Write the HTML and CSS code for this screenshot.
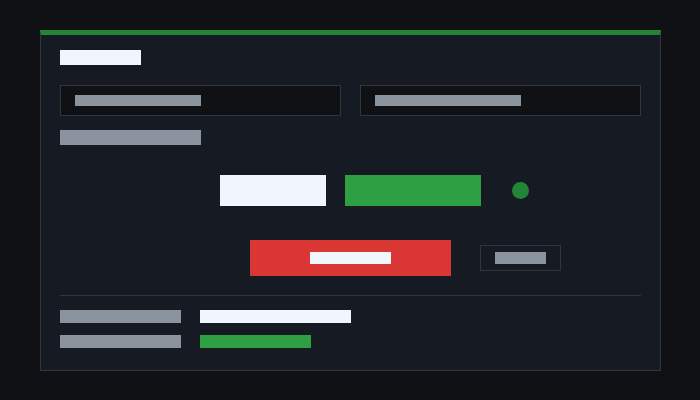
FILE: index.html
```html
<!DOCTYPE html>
<html lang="en">
<head>
<meta charset="utf-8">
<title>Settings panel</title>
<link rel="stylesheet" href="styles.css">
</head>
<body>
<main class="panel">
  <div class="title"></div>
  <div class="inputs">
    <div class="input"><span class="ph ph-a"></span></div>
    <div class="input"><span class="ph ph-b"></span></div>
  </div>
  <div class="label"></div>
  <div class="actions">
    <span class="btn btn-light"></span>
    <span class="btn btn-green"></span>
    <span class="dot"></span>
  </div>
  <div class="danger-row">
    <span class="btn-danger"><span class="danger-text"></span></span>
    <span class="btn-outline"><span class="outline-text"></span></span>
  </div>
  <div class="divider"></div>
  <div class="stats">
    <div class="stat"><span class="key"></span><span class="val val-white"></span></div>
    <div class="stat"><span class="key"></span><span class="val val-green"></span></div>
  </div>
</main>
</body>
</html>
```

FILE: styles.css
```css
html, body {
  margin: 0;
  padding: 0;
  background: #0f1114;
  font-family: "Liberation Sans", Arial, sans-serif;
}

body {
  width: 700px;
  height: 400px;
  padding: 30px 0 0 40px;
  box-sizing: border-box;
}

.panel {
  width: 621px;
  height: 341px;
  box-sizing: border-box;
  background: #161a22;
  border: 1px solid #30363d;
  border-top: 5px solid #238636;
  padding: 15px 19px 0 19px;
  display: flex;
  flex-direction: column;
}

.title {
  width: 81px;
  height: 15px;
  background: #f0f6fc;
  margin-bottom: 20px;
}

.inputs {
  display: grid;
  grid-template-columns: 1fr 1fr;
  column-gap: 19px;
  margin-bottom: 14px;
}

.input {
  height: 31px;
  box-sizing: border-box;
  border: 1px solid #30363d;
  background: #0f1114;
  padding-left: 14px;
  display: flex;
  align-items: center;
}

.ph {
  display: block;
  height: 11px;
  background: #8b949e;
}
.ph-a { width: 126px; }
.ph-b { width: 146px; }

.label {
  width: 141px;
  height: 15px;
  background: #8b949e;
  margin-bottom: 30px;
}

.actions {
  display: flex;
  align-items: center;
  height: 31px;
  padding-left: 160px;
  margin-bottom: 34px;
}

.btn {
  display: block;
  height: 31px;
}
.btn-light {
  width: 106px;
  background: #f0f6fc;
}
.btn-green {
  width: 136px;
  background: #2ea043;
  margin-left: 19px;
}
.dot {
  display: block;
  width: 17px;
  height: 17px;
  border-radius: 50%;
  background: #238636;
  margin-left: 31px;
}

.danger-row {
  display: flex;
  align-items: center;
  height: 36px;
  padding-left: 190px;
  margin-bottom: 19px;
}

.btn-danger {
  width: 201px;
  height: 36px;
  background: #da3633;
  display: flex;
  align-items: center;
  justify-content: center;
}
.danger-text {
  display: block;
  width: 81px;
  height: 12px;
  background: #f0f6fc;
}

.btn-outline {
  margin-left: 29px;
  height: 26px;
  box-sizing: border-box;
  border: 1px solid #30363d;
  padding: 0 14px;
  display: flex;
  align-items: center;
}
.outline-text {
  display: block;
  width: 51px;
  height: 12px;
  background: #8b949e;
}

.divider {
  height: 1px;
  background: #30363d;
  margin-bottom: 14px;
}

.stats {
  display: flex;
  flex-direction: column;
  gap: 12px;
}

.stat {
  display: flex;
  gap: 19px;
  height: 13px;
}
.key {
  width: 121px;
  background: #8b949e;
}
.val-white {
  width: 151px;
  background: #f0f6fc;
}
.val-green {
  width: 111px;
  background: #2ea043;
}
```
